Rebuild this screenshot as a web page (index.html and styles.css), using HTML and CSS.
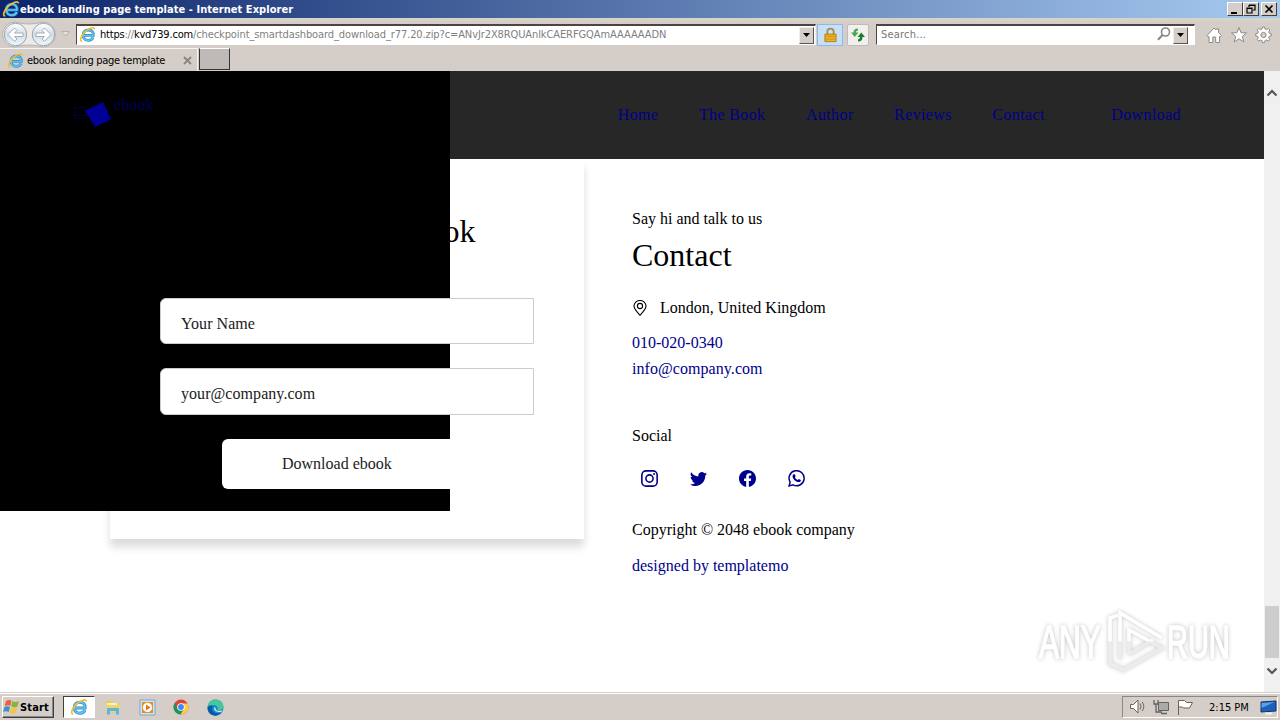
FILE: index.html
```html
<!DOCTYPE html>
<html lang="en">
<head>
<meta charset="utf-8">
<title>ebook landing page template</title>
<link rel="stylesheet" href="styles.css">
</head>
<body>
<svg class="defs" width="0" height="0">
  <defs>
    <linearGradient id="round" x1="0" y1="0" x2="0" y2="1"><stop offset="0" stop-color="#fff"/><stop offset=".5" stop-color="#d5dce5"/><stop offset="1" stop-color="#edfaff"/></linearGradient>
    <symbol id="ie" viewBox="0 0 18 18">
      <path d="M4.500 10h10.600C15.500 6 13 4.200 9.900 4.200 6.700 4.200 4.300 6.300 4.300 9.800c0 3.400 2.400 5.400 5.600 5.400 2.500 0 4.200-1.100 5-3" fill="none" stroke="#2a88c8" stroke-width="3"/>
      <path d="M4.500 10h10.400C15.200 6 13 4.200 9.900 4.200 6.700 4.200 4.300 6.300 4.300 9.800c0 3.400 2.400 5.400 5.600 5.400 2.500 0 4.100-1.100 4.900-3" fill="none" stroke="#62c3ee" stroke-width="1.700"/>
      <path d="M3.300 16C-.2 16 2.200 10.200 6.500 6.200 10.500 2.400 16.300.200 16.400 3.600" fill="none" stroke="#f0bd32" stroke-width="1.700"/>
    </symbol>
  </defs>
</svg>
<div class="desktop">
  <header class="titlebar">
    <svg class="ie" width="18" height="18"><use href="#ie"/></svg>
    <span class="title">ebook landing page template - Internet Explorer</span>
    <div class="controls">
      <span class="win"><svg width="14" height="12"><path d="M3 9h6v2H3z"/></svg></span>
      <span class="win"><svg width="14" height="12"><path d="M5 2h6v5h-2M5 2v2M5 2.500h6M3 5h5v5H3zM3 5.500h5" fill="none" stroke="#000" stroke-width="1.200"/></svg></span>
      <span class="win close"><svg width="14" height="12"><path d="M3.500 2.500l7 7M10.500 2.500l-7 7" stroke="#000" stroke-width="1.700"/></svg></span>
    </div>
  </header>
  <div class="toolbar">
    <svg class="navs" width="73" height="30" viewBox="0 0 73 30">
      <path d="M15 3Q29 7 43 3a12.500 12.500 0 0 1 0 25Q29 24 15 28a12.500 12.500 0 0 1 0-25z" fill="#eeeae6" stroke="#b5b2b0"/>
      <circle cx="15.500" cy="15.500" r="11.200" fill="url(#round)" stroke="#98a4b0"/><circle cx="43.500" cy="15.500" r="11.200" fill="url(#round)" stroke="#98a4b0"/>
      <path d="M8 15.500l6.500-6.500 2.500 2.500-2.500 2.500H23v3.500h-8.500L17 20l-2.500 2.300z" fill="#fff" stroke="#9aa5b1" stroke-width=".9"/>
      <path d="M51 15.500L44.500 9 42 11.500l2.500 2.500H36v3.500h8.500L42 20l2.500 2.300z" fill="#fff" stroke="#9aa5b1" stroke-width=".9"/>
      <path d="M61.500 12.500h8l-4 4.500z" fill="#e4e0dc" stroke="#b7b3ae"/>
    </svg>
    <div class="address">
      <svg class="ie" width="17" height="17"><use href="#ie"/></svg>
      <span class="url"><b>https</b>://<b>kvd739.com</b><span class="path">/checkpoint_smartdashboard_download_r77.20.zip?c=ANvJr2X8RQUAnlkCAERFGQAmAAAAAADN</span></span>
      <span class="drop"><svg width="9" height="5"><path d="M1 0h7L4.500 4z"/></svg></span>
    </div>
    <span class="lock"><svg width="13" height="16" viewBox="0 0 14 18"><path d="M3.500 9V5.200C3.500.8 10.500.8 10.500 5.200V9" fill="none" stroke="#a58c4a" stroke-width="2"/><path d="M.7 8h12.600v8.500H.7z" fill="#f0b323" stroke="#b07a12"/><path d="M1 10.500h12M1 13.500h12" stroke="#cb8c18"/></svg></span>
    <span class="refresh"><svg width="16" height="16" viewBox="0 0 16 16"><path d="M8 1.500Q3.500 1.500 3.500 5.500H1L4.700 10 8.500 5.500H6Q6 3.500 8 3.500z" fill="#4aa84d"/><path d="M8 14.500q4.500 0 4.500-4.500H15L11.300 5.500 7.500 10H10q0 2-2 2.500z" fill="#16802a"/></svg></span>
    <div class="search"><span>Search...</span>
      <svg width="14" height="14" viewBox="0 0 14 14"><circle cx="8.500" cy="5" r="4" fill="#fff" stroke="#858585" stroke-width="1.600"/><path d="M5.500 8L1 12.800" stroke="#858585" stroke-width="2"/></svg>
      <span class="drop"><svg width="9" height="5"><path d="M1 0h7L4.500 4z"/></svg></span>
    </div>
    <svg class="tools" width="66" height="18" viewBox="0 0 66 18" fill="#fff" stroke="#8d8a86" stroke-width="1">
      <path d="M1 9.500L8 2l2 2V3h2.500v3.500L15.500 9.500 14.200 11 13.500 10.400V16.500H9.700V11H6.800v5.500H3V10.400L2.300 11z"/>
      <path d="M33 1.500l2 5.200 5.500.2-4.200 3.500 1.500 5.500L33 12.800l-4.800 3.100 1.500-5.500-4.200-3.500 5.500-.2z"/>
      <path d="M56.500 1h2l.5 2 1.500.6 1.800-1.100 1.500 1.500-1.100 1.800.6 1.500 2 .5v2l-2 .5-.6 1.500 1.100 1.800-1.500 1.500-1.800-1.100-1.500.6-.5 2h-2l-.5-2-1.500-.6-1.800 1.100-1.500-1.500 1.100-1.800-.6-1.500-2-.5v-2l2-.5.6-1.500-1.100-1.800 1.500-1.500L54.500 3.600 56 3z"/><circle cx="57.500" cy="9" r="2.600" fill="#d6d1ca"/>
    </svg>
  </div>
  <div class="tabs">
    <div class="tab"><svg class="ie" width="17" height="17"><use href="#ie"/></svg><span>ebook landing page template</span><svg width="9" height="9"><path d="M1 1l7 7M8 1L1 8" stroke="#858585" stroke-width="1.800"/></svg></div>
    <div class="newtab"></div>
  </div>
  <div class="window">
    <main class="page">
      <div class="blackout"></div>
      <div class="pagehead">
        <a class="logo"><svg width="40" height="30" viewBox="0 0 40 30"><path d="M1.500 9.500h11v11h-11zM1.500 17.500h9" fill="none" stroke="#00003f"/><path d="M12 12.500L30 4l8 17.500L22 29z" fill="#000096"/></svg><span>ebook</span></a>
        <nav><a>Home</a><a>The Book</a><a>Author</a><a>Reviews</a><a>Contact</a><a class="download">Download</a></nav>
      </div>
      <div class="content">
        <section class="card">
          <h2>Get your free ebook</h2>
          <div class="field">Your Name</div>
          <div class="field email">your@company.com</div>
          <div class="button">Download ebook</div>
        </section>
        <section class="contact">
          <p class="hi">Say hi and talk to us</p>
          <h2>Contact</h2>
          <p class="place"><svg width="16" height="16" viewBox="0 0 16 16" fill="none" stroke="#000" stroke-width="1.100"><path d="M8 15.300C5.500 12.500 2 9 2 6a6 5.500 0 0 1 12 0c0 3-3.500 6.500-6 9.300z"/><circle cx="8" cy="6" r="2.600"/></svg>London, United Kingdom</p>
          <p><a>010-020-0340</a></p>
          <p class="mail"><a>info@company.com</a></p>
          <p class="social-title">Social</p>
          <div class="social">
            <svg width="17" height="17" viewBox="0 0 16 16" fill="none" stroke="#00008b" stroke-width="1.500"><rect x=".8" y=".8" width="14.400" height="14.400" rx="4"/><circle cx="8" cy="8" r="3.400"/><circle cx="12.300" cy="3.700" r=".95" fill="#00008b" stroke="none"/></svg>
            <svg width="17" height="17" viewBox="0 0 16 16" fill="#00008b"><path d="M5.026 15c6.038 0 9.341-5.003 9.341-9.334 0-.14 0-.282-.006-.422A6.685 6.685 0 0 0 16 3.542a6.658 6.658 0 0 1-1.889.518 3.301 3.301 0 0 0 1.447-1.817 6.533 6.533 0 0 1-2.087.793A3.286 3.286 0 0 0 7.875 6.030 9.325 9.325 0 0 1 1.112 2.100a3.289 3.289 0 0 0 1.018 4.382A3.323 3.323 0 0 1 .64 6.575v.045a3.288 3.288 0 0 0 2.632 3.218 3.203 3.203 0 0 1-.865.115 3.230 3.230 0 0 1-.614-.057 3.283 3.283 0 0 0 3.067 2.277A6.588 6.588 0 0 1 .78 13.580a6.320 6.320 0 0 1-.78-.045A9.344 9.344 0 0 0 5.026 15z"/></svg>
            <svg width="17" height="17" viewBox="0 0 16 16" fill="#00008b"><path d="M16 8.049c0-4.446-3.582-8.050-8-8.050C3.580 0 0 3.603 0 8.050c0 4.017 2.926 7.347 6.750 7.951v-5.625H4.720V8.050h2.030V6.275c0-2.017 1.195-3.131 3.022-3.131.876 0 1.791.157 1.791.157v1.980h-1.009c-.993 0-1.303.621-1.303 1.258v1.510h2.218l-.354 2.326H9.250V16c3.824-.604 6.750-3.934 6.750-7.951z"/></svg>
            <svg width="17" height="17" viewBox="0 0 16 16" fill="none" stroke="#00008b"><path d="M1 15l1-3.600A7.100 7.100 0 1 1 4.700 14z" stroke-width="1.400"/><path d="M5.300 3.900h1l.9 2-.7 1c.7 1.300 1.500 2 2.800 2.500l.9-1 1.900.9c.2 1.200-.8 2.200-2.100 2.100C7.300 11 4 8 4.300 5.600c0-.7.400-1.300 1-1.700z" fill="#00008b" stroke="none"/></svg>
          </div>
          <p class="copy">Copyright © 2048 ebook company</p>
          <p class="by"><a>designed by templatemo</a></p>
        </section>
      </div>
      <svg class="watermark" width="204" height="70" viewBox="0 0 204 70">
        <defs><linearGradient id="wm" x1="0" y1="0" x2="0" y2="70" gradientUnits="userSpaceOnUse"><stop offset=".5" stop-color="#fff"/><stop offset=".51" stop-color="#ececec"/></linearGradient></defs>
        <g fill="url(#wm)">
          <text transform="translate(6 52) scale(.655 1)" stroke="url(#wm)">ANY</text>
          <text transform="translate(134 52) scale(.63 1)" stroke="url(#wm)">RUN</text>
        </g>
        <g fill="none" stroke="url(#wm)" stroke-width="3.600">
          <path d="M85 9l-8 3v46l8 3"/>
          <path d="M87 53V7l42 25"/><path d="M96 48V24l33 18-39 22-6-4"/><path d="M96 48l24-14"/>
        </g>
      </svg>
    </main>
    <div class="scrollbar">
      <svg width="12" height="8"><path d="M1.500 6.500L6 2l4.500 4.500" fill="none" stroke="#555" stroke-width="2.200"/></svg>
      <div class="thumb"></div>
      <svg width="12" height="8"><path d="M1.500 1.500L6 6l4.500-4.500" fill="none" stroke="#555" stroke-width="2.200"/></svg>
    </div>
  </div>
  <footer class="taskbar">
    <div class="start"><svg width="17" height="16" viewBox="0 0 17 16"><path d="M3 2q3-2 5.500-.2L7.300 7Q5 5.500 1.700 7z" fill="#ed6237"/><path d="M9.300 2.300q3 1.500 6.500 0L14.500 7.600q-3 1.600-6.300 0z" fill="#83b63a"/><path d="M1.500 8q3-1.700 5.500 0L5.700 13Q3 11.300.2 13z" fill="#3891d2"/><path d="M8 8.500q3 1.500 6.300 0L13 13.600q-3.200 1.700-6.300 0z" fill="#f6c443"/></svg><span>Start</span></div>
    <div class="task active"><svg class="ie" width="18" height="18"><use href="#ie"/></svg></div>
    <div class="task"><svg width="16" height="16"><path d="M1 2h6l1 2h6v10H1z" fill="#eacb69"/><path d="M2 4h10v8H2z" fill="#fff2aa"/><path d="M1 6h14v7H1z" fill="#f0d474"/><path d="M2 15.500V9h12v6.500h-3V12H5v3.500z" fill="#5ab7e5"/></svg></div>
    <div class="task"><svg width="17" height="17"><path d="M1 1h15v15H1z" fill="#cfe4f7" stroke="#6eaad9"/><path d="M3 3h11v11H3z" fill="#f28a16"/><circle cx="8.500" cy="8.500" r="4.700" fill="#fff"/><path d="M7 5.500v6l4.500-3z" fill="#e37512"/></svg></div>
    <div class="task"><svg width="16" height="16"><circle cx="8" cy="8" r="7.500" fill="#db4437"/><path d="M1.500 4.300A7.500 7.500 0 0 0 7.500 15.500L11 9.500 5 10z" fill="#149b5b"/><path d="M8 4.500h6.600A7.500 7.500 0 0 1 7.500 15.500L11 10z" fill="#ffcd40"/><circle cx="8" cy="8" r="3.800" fill="#fff"/><circle cx="8" cy="8" r="2.900" fill="#4285f4"/></svg></div>
    <div class="task"><svg width="17" height="17"><circle cx="8.500" cy="8.500" r="8" fill="#138bd1"/><path d="M.6 8C1 3 4.500.5 8.500.5c5 0 8 3.500 8 7 0 3-3.500 4.300-6 3.500 1.200-2.500-.6-5-3.700-5C4 6 1.500 7 .6 8z" fill="#45c798"/><path d="M5.800 7.300C3.300 12 8 15.700 14.300 13.800 9 19.500.5 16 .5 9 1.500 6 4.500 6 5.800 7.300z" fill="#0b59a0"/><path d="M8 8.500c-1 2.500 2 5 7 3.500" fill="none" stroke="#d6e4e8" stroke-width="1.300"/></svg></div>
    <div class="tray">
      <svg width="66" height="18" viewBox="0 0 66 18" fill="#fff" stroke="#66625e"><path d="M1.500 6.500h3L9 2v13l-4.500-4.500h-3z"/><path d="M11 5.500q2 3 0 6M13.200 4q3.200 4.500 0 9" fill="none"/><path d="M29.500 4.500h10v8h-10z" fill="#aaa"/><path d="M32 15.500h6M25 2v4h4V2M27 6v8h6" fill="none" stroke-width="1.300"/><path d="M49.500 17V2.500h6l2 2h6l-3 5.500h-6l-1-1h-4"/></svg>
      <span class="clock">2:15 PM</span>
      <svg width="17" height="15"><path d="M1 2l15-1v10l-15 1z" fill="#1d62ba" stroke="#0d3569"/><path d="M1.500 3l13-1-13 6z" fill="#57a2e4"/><path d="M5 13.500h7" stroke="#efefef" stroke-width="2"/></svg>
    </div>
  </footer>
</div>
</body>
</html>
```

FILE: styles.css
```css
* { box-sizing: border-box; }
body { margin: 0; font-family: "Liberation Serif", serif; font-size: 16px; color: #000; overflow: hidden; }
h2, p { margin: 0; font-weight: 400; }
svg { flex: none; display: block; }
.defs { position: absolute; }
.desktop { width: 1280px; height: 720px; display: flex; flex-direction: column; background: #d5cec8; overflow: hidden; }
.titlebar, .toolbar, .tabs, .taskbar { flex: none; display: flex; font-family: "DejaVu Sans Condensed", "DejaVu Sans", sans-serif; font-stretch: condensed; font-size: 11px; white-space: nowrap; }
.titlebar { height: 18px; align-items: center; padding: 0 3px 0 2px; background: linear-gradient(90deg, #0c246a, #a6caf0); }
.title { color: #fff; font-weight: 700; letter-spacing: .05px; }
.controls { margin-left: auto; display: flex; }
.win { width: 16px; height: 14px; background: #d5cec8; border: 1px solid; border-color: #fff #404040 #404040 #fff; }
.close { margin-left: 2px; }
.toolbar { height: 30px; align-items: center; border-top: 3px solid #d7d3c6; }
.navs { margin-top: -2px; }
.address { margin-left: 3px; width: 740px; height: 21px; display: flex; align-items: center; background: #fff; border: 1px solid; border-top-width: 2px; border-color: #4c4345 #eee #fff #4c4345; padding-left: 2px; }
.address .ie { margin-top: -1px; }
.url { margin: -2px 0 0 4px; color: #808080; letter-spacing: -.2px; }
.url b { font-weight: 400; color: #000; }
.url .path { letter-spacing: -.1px; }
.drop { margin-left: auto; width: 15px; height: 17px; display: flex; align-items: center; justify-content: center; background: #d5cec8; border: 1px solid; border-color: #eee #555 #555 #eee; }
.address .drop { margin-right: 1px; }
.lock { margin-left: 1px; width: 26px; height: 22px; display: flex; align-items: center; justify-content: center; background: #c8dff8; border: 1px solid #8eb8e5; }
.refresh { margin-left: 4px; width: 22px; height: 22px; display: flex; align-items: center; justify-content: center; background: #f2f0ee; border: 1px solid #c0bbb6; border-radius: 2px; }
.search { margin-left: 7px; width: 319px; height: 21px; display: flex; align-items: center; background: #fff; border: 1px solid; border-top-width: 2px; border-color: #4c4345 #fff #fff #4c4345; color: #777; padding: 0 6px 0 4px; letter-spacing: .2px; }
.search > span:first-child { margin-top: -2px; }
.search > svg { margin: -2px 0 0 auto; }
.search .drop { margin-left: 2px; }
.tools { margin: 0 0 0 11px; }
.tabs { height: 23px; }
.tab { width: 198px; height: 23px; display: flex; align-items: center; border-top: 1px solid #f7f5f2; border-right: 1px solid #f2efec; padding-left: 7px; gap: 3px; letter-spacing: -.28px; }
.tab svg:last-child { margin-left: auto; margin-right: 5px; }
.newtab { margin-left: 1px; width: 31px; height: 22px; background: #bfbab7; border: 1px solid; border-color: #fff #333 #333 #333; }
.window { flex: none; height: 621px; display: flex; }
.page { position: relative; width: 1264px; height: 621px; background: #fff; overflow: hidden; }
.blackout { position: absolute; z-index: 1; left: 0; top: 0; width: 450px; height: 440px; background: #000; }
.pagehead { height: 88px; background: #272727; display: flex; justify-content: space-between; align-items: center; padding: 0 83px 0 73px; }
.logo { position: relative; z-index: 2; display: flex; align-items: flex-start; color: #000055; margin-bottom: 7px; }
.logo span { margin: 0 0 0 1px; letter-spacing: .1px; }
.logo svg { margin-top: 2px; }
nav { display: flex; gap: 40.5px; color: #00008b; letter-spacing: .38px; }
nav .download { margin-left: 26px; }
.content { display: flex; align-items: flex-start; }
.card { margin-left: 110px; width: 474px; height: 380px; padding: 53px 50px 0; box-shadow: 0 8px 8px rgba(0,0,0,.14); display: flex; flex-direction: column; }
.card h2, .contact h2 { font-size: 32px; line-height: 38px; }
.card h2 { text-align: center; }
.field { position: relative; z-index: 2; height: 46px; margin-top: 48px; background: #fff; border: 1px solid #ccc; border-radius: 6px 0 0 6px; padding: 0 20px; line-height: 50px; color: #212121; letter-spacing: .06px; }
.email { margin-top: 24px; height: 47px; }
.button { position: relative; z-index: 2; align-self: center; margin-top: 24px; width: 250px; height: 50px; background: #fff; border-radius: 6px; padding-left: 60px; line-height: 50px; color: #212121; }
.contact { margin: 50px 0 0 48px; line-height: 20px; }
.contact a { color: #00008b; }
.contact h2 { margin-top: 7px; }
.place { display: flex; align-items: center; margin-top: 24px; gap: 12px; }
.contact .place + p { margin-top: 15px; }
.mail { margin-top: 6px; letter-spacing: .06px; }
.social-title { margin-top: 47px; }
.social { display: flex; gap: 32px; margin: 24px 0 0 9px; }
.copy { margin-top: 33px; }
.by { margin-top: 16px; }
.watermark { position: absolute; left: 1033px; top: 535px; overflow: visible; filter: drop-shadow(0 0 2px rgba(0,0,0,.24)); }
.watermark text { font: 400 46px "Liberation Sans", sans-serif; stroke-width: 1.6px; }
.scrollbar { width: 16px; background: #f0f0f0; display: flex; flex-direction: column; align-items: center; padding: 18px 0 17px; }
.thumb { width: 14px; height: 52px; background: #cdcdcd; margin: auto 0 9px; }
.taskbar { height: 28px; align-items: center; border-top: 1px solid #d5cec8; box-shadow: inset 0 1px #fff; padding: 1px 2px 0; }
.start { width: 52px; height: 22px; display: flex; align-items: center; padding-left: 0; font-weight: 700; border: 1px solid; border-color: #fff #404040 #404040 #fff; box-shadow: inset -1px -1px #888; }
.start span { letter-spacing: .15px; }
.task { width: 34px; display: flex; justify-content: center; }
.active { width: 32px; height: 22px; align-items: center; margin: 0 1px 0 9px; background: #fff; border: 1px solid; border-color: #404040 #fff #fff #404040; }
.tray { margin-left: auto; width: 156px; height: 22px; display: flex; align-items: center; padding-left: 6px; border: 1px solid; border-color: #888 #fff #fff #888; }
.clock { margin: 0 auto 0 14px; }
```
